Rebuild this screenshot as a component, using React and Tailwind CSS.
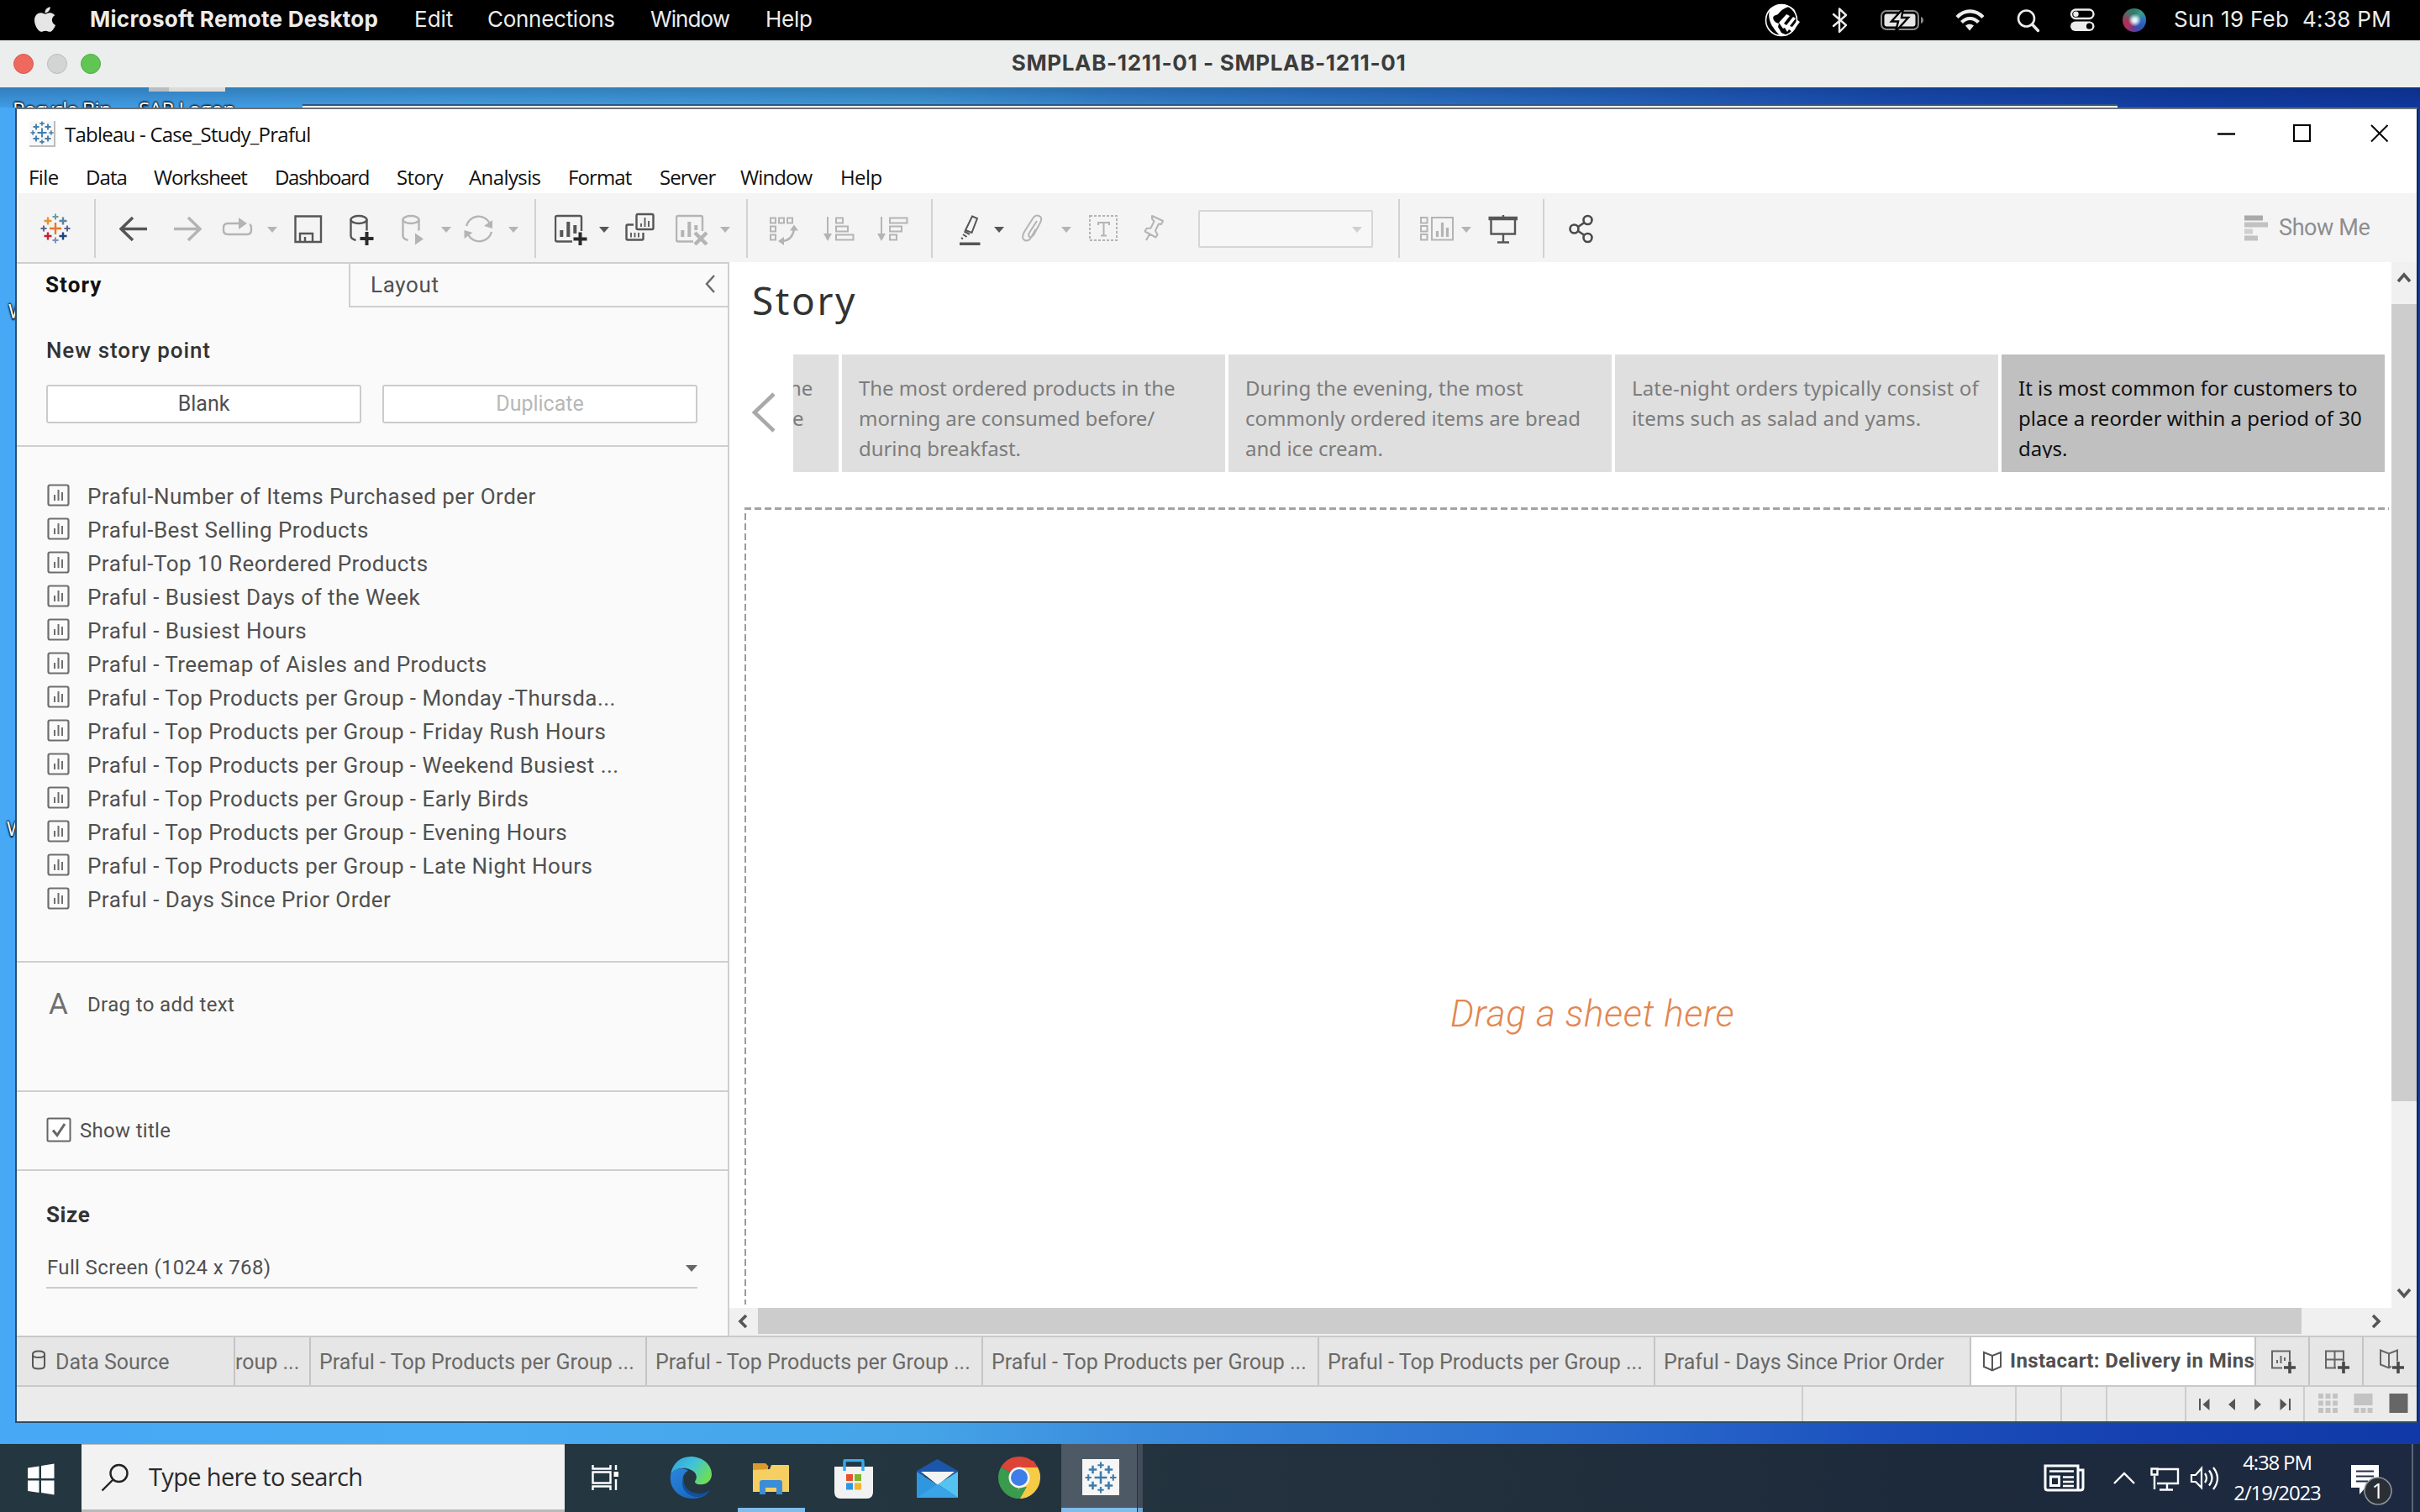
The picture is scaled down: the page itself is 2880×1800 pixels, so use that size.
import React from "react";
import { FaApple } from "react-icons/fa";

const INTER = "font-[Inter,sans-serif]";
const SEGOE = "font-['Open_Sans','Noto_Sans',sans-serif]";
const BENTON = "font-[Roboto,sans-serif]";
const BOOK = "font-['Noto_Sans',sans-serif]";

/* ---------- generic helpers ---------- */

function Svg({ x = 0, y = 0, w, h, className = "", sw = 2, children }) {
  return (
    <svg
      width={w}
      height={h}
      viewBox={`${x} ${y} ${w} ${h}`}
      fill="none"
      stroke="currentColor"
      strokeWidth={sw}
      className={`block shrink-0 ${className}`}
    >
      {children}
    </svg>
  );
}

function Tool({ x, w, className = "", children, sw }) {
  return (
    <Svg x={x} y={252} w={w} h={40} sw={sw} className={className}>
      {children}
    </Svg>
  );
}

const Caret = ({ className = "" }) => (
  <Svg w={12} h={40} className={className}>
    <path d="M0 18h12l-6 7z" fill="currentColor" stroke="none" />
  </Svg>
);

const Sep = ({ className = "" }) => <div className={`h-[70px] w-[2px] shrink-0 bg-[#d2d2d2] ${className}`} />;

const MARK = [
  [18, 18, 7], [9, 9, 4.5], [27, 9, 4.5], [9, 27, 4.5], [27, 27, 4.5],
  [18, 4, 3.5], [18, 32, 3.5], [4, 18, 3.5], [32, 18, 3.5],
];
const COLOR_MARK = ["#e8762d", "#eb9129", "#59879b", "#c72037", "#1f447e", "#7199a6", "#7b8eb8", "#5b6591", "#5b6591"];

function TableauMark({ size, colored, className = "" }) {
  return (
    <svg width={size} height={size} viewBox="0 0 36 36" fill="none" className={`block shrink-0 ${className}`}>
      {MARK.map(([cx, cy, r], i) => (
        <path
          key={i}
          d={`M${cx - r} ${cy}h${2 * r}M${cx} ${cy - r}v${2 * r}`}
          stroke={colored ? COLOR_MARK[i] : "#3f7cac"}
          strokeWidth={i > 4 ? 2 : 2.4}
        />
      ))}
    </svg>
  );
}

/* ---------- macOS ---------- */

function MacMenuBar() {
  return (
    <div className={`${INTER} flex h-[48px] shrink-0 items-center bg-black pb-[3px] text-[26px] leading-[45px] whitespace-nowrap text-[#ececec]`}>
      <FaApple className="ml-[38px] h-[34px] w-[31px] shrink-0 text-[#e6e6e6]" />
      <div className="ml-[38px] w-[386px] font-bold tracking-[0.29px]">Microsoft Remote Desktop</div>
      <div className="w-[87px]">Edit</div>
      <div className="w-[194px] tracking-[-0.28px]">Connections</div>
      <div className="w-[137px] tracking-[-0.9px]">Window</div>
      <div className="tracking-[-0.3px]">Help</div>
      <div className="ml-auto flex items-center pt-[3px]">
        <Svg x={2102} y={4} w={42} h={40}>
          <circle cx="2122" cy="24" r="18.500" fill="#000" stroke="#fff" strokeWidth="1.600" />
          <path d="M2108 12c7-8 20-9 29-1l2 3-8-6c-7 2-10 5-13 9l-5 2c-2 3 0 6 3 8l3 1-1 4 4 7 7 3c-2 1-8 1-10-1-6-6-6-8-8-10-3-5-5-12-3-19z" fill="#fff" stroke="none" />
          <path d="M2119 27l9-10 4 2-7 9 3 2 8-10 3 2-7 9 3 1 6-8 3 2-9 12-4-3-2 3-3-5-2 1z" fill="#fff" stroke="none" />
        </Svg>
        <Svg x={2182} y={8} w={20} h={32} sw={2.4} className="ml-[38px]">
          <path d="M2184 17l15 13-8 8V10.500l8 7.500-15 13" strokeLinejoin="round" strokeLinecap="round" />
        </Svg>
        <Svg x={2240} y={8} w={52} h={32} className="ml-[38px]">
          <rect x="2241" y="13" width="44" height="22" rx="6" stroke="#8a8a8a" />
          <path d="M2288 20c4 1 4 7 0 8z" fill="#8a8a8a" stroke="none" />
          <rect x="2244.500" y="16.500" width="37" height="15" rx="3" fill="#e6e6e6" stroke="none" />
          <path d="M2267 10l-14 15.500h8l-3 12 15-16.500h-8z" fill="#e6e6e6" stroke="#000" strokeWidth="2.400" />
        </Svg>
        <Svg x={2328} y={8} w={36} h={32} sw={4.2} className="ml-[36px]">
          <path d="M2331 20.500c9-9.500 22-9.500 31 0M2336.500 26.500c6-6 14-6 20 0" />
          <path d="M2341 30.500c3-2.500 7-2.500 10 0l-5 6z" fill="currentColor" stroke="none" />
        </Svg>
        <Svg x={2402} y={8} w={28} h={32} sw={2.600} className="ml-[38px]">
          <circle cx="2413.500" cy="22" r="9.500" />
          <path d="M2420.500 29l7 7.500" strokeWidth="3.400" strokeLinecap="round" />
        </Svg>
        <Svg x={2465} y={8} w={32} h={32} sw={2.400} className="ml-[35px]">
          <rect x="2467" y="11.500" width="26.500" height="10.500" rx="5.250" />
          <circle cx="2472.500" cy="16.700" r="3.200" fill="currentColor" stroke="none" />
          <rect x="2466" y="25.500" width="28.500" height="11.500" rx="5.750" fill="currentColor" stroke="none" />
          <circle cx="2488.500" cy="31.200" r="3.600" fill="#000" stroke="none" />
        </Svg>
        <div className="ml-[31px] h-[28px] w-[28px] rounded-full bg-[radial-gradient(circle_at_52%_50%,#ffffff_0,#cfe6f0_14%,transparent_38%),conic-gradient(from_0deg,#2f7d68,#3f9a8c,#2e6fc0,#2b58b5,#5b3f9c,#b02c5c,#a03656,#4c6f68,#2f7d68)]" />
      </div>
      <div className="ml-[33px] w-[153px] tracking-[0.32px]">Sun 19 Feb</div>
      <div className="w-[140px] tracking-[0.3px]">4:38 PM</div>
    </div>
  );
}

function MacTitleBar() {
  return (
    <div className="flex h-[56px] shrink-0 items-center bg-[#eceeed]">
      <div className="flex w-[300px] gap-[16px] pl-[16px]">
        <div className="h-[24px] w-[24px] rounded-full border border-[#d9574b] bg-[#ee6a5f]" />
        <div className="h-[24px] w-[24px] rounded-full border border-[#b9bbba] bg-[#d3d5d4]" />
        <div className="h-[24px] w-[24px] rounded-full border border-[#4fae43] bg-[#61c554]" />
      </div>
      <div className={`${INTER} flex-1 pr-[303px] pb-[3px] text-center text-[26px] font-bold tracking-[0.65px] text-[#3c3c3c]`}>
        SMPLAB-1211-01 - SMPLAB-1211-01
      </div>
    </div>
  );
}

/* ---------- Tableau window ---------- */

function WindowTitle() {
  return (
    <div className={`${SEGOE} flex h-[58px] shrink-0 items-center text-[24px] text-[#111]`}>
      <div className="ml-[15px] flex h-[31px] w-[31px] items-center justify-center border-r-2 border-b-2 border-[#bdbdbd] bg-[#f7f7f7]">
        <TableauMark size={28} />
      </div>
      <div className="ml-[11px] pt-[2px] tracking-[-0.76px] whitespace-nowrap">Tableau - Case_Study_Praful</div>
      <Svg x={2638} y={144} w={214} h={30} className="mr-[24px] ml-auto text-black">
        <path d="M2639 159.500h21" strokeWidth="2.400" />
        <rect x="2730" y="149" width="19" height="19" />
        <path d="M2822 149l19.500 19.500M2841.500 149l-19.500 19.500" strokeWidth="1.900" />
      </Svg>
    </div>
  );
}

const MENUS = [
  ["File", "w-[68px] tracking-[-0.6px]"],
  ["Data", "w-[81px] tracking-[-0.9px]"],
  ["Worksheet", "w-[144px] tracking-[-1.1px]"],
  ["Dashboard", "w-[145px] tracking-[-1.3px]"],
  ["Story", "w-[86px] tracking-[-0.6px]"],
  ["Analysis", "w-[118px] tracking-[-0.6px]"],
  ["Format", "w-[109px] tracking-[-0.9px]"],
  ["Server", "w-[96px] tracking-[-0.9px]"],
  ["Window", "w-[119px] tracking-[-0.9px]"],
  ["Help", "w-[60px] tracking-[-0.6px]"],
];

function MenuRow() {
  return (
    <div className={`${SEGOE} flex h-[42px] shrink-0 items-center pt-[4px] pl-[14px] text-[24px] text-[#111]`}>
      {MENUS.map(([label, cls]) => (
        <div key={label} className={`shrink-0 whitespace-nowrap ${cls}`}>{label}</div>
      ))}
    </div>
  );
}

function Toolbar() {
  const on = "text-[#565656]";
  const off = "text-[#b4b4b4]";
  return (
    <div className="flex h-[82px] shrink-0 items-center bg-[#f4f4f4] pt-[2px]">
      <TableauMark size={36} colored className="ml-[28px]" />
      <Sep className="ml-[28px]" />
      <Tool x={142} w={34} sw={3.6} className={`ml-[28px] ${on}`}>
        <path d="M144 272.500h31M158 259l-14 13.500 14 13.500" />
      </Tool>
      <Tool x={206} w={34} sw={3.6} className={`ml-[30px] ${off}`}>
        <path d="M207 272.500h31M224 259l14 13.500-14 13.500" />
      </Tool>
      <Tool x={264} w={38} className={`ml-[24px] ${off}`}>
        <path d="M288 266h-17q-5 0-5 5v3q0 5 5 5h23q5 0 5-5v-3q0-3-2-4" strokeWidth="2.400" />
        <path d="M284 259l10 7-10 7z" fill="currentColor" stroke="none" />
      </Tool>
      <Caret className={`ml-[16px] ${off}`} />
      <Tool x={350} w={34} sw={2.400} className={`ml-[20px] ${on}`}>
        <path d="M351.500 257.500h30.500v30.500h-30.500zM357 288v-10h15v10M363 288v-6" />
      </Tool>
      <Tool x={414} w={32} sw={2.400} className={`ml-[30px] ${on}`}>
        <ellipse cx="427" cy="261.500" rx="9.500" ry="4.500" />
        <path d="M417.500 261.500v19q0 4 6 5.500M436.500 261.500v13" />
        <path d="M436.500 276v16M428.500 284h16" strokeWidth="4" stroke="#2b2b2b" />
      </Tool>
      <Tool x={477} w={30} sw={2.400} className={`ml-[31px] ${off}`}>
        <ellipse cx="489" cy="261.500" rx="9.500" ry="4.500" />
        <path d="M479.500 261.500v19q0 4 6 5.500M498.500 261.500v13" />
        <path d="M494 277.500v14l10-7z" fill="currentColor" stroke="none" />
      </Tool>
      <Caret className={`ml-[18px] ${off}`} />
      <Tool x={552} w={36} sw={2.400} className={`ml-[15px] ${off}`}>
        <path d="M555 269a15 15 0 0 1 28-3M585 276a15 15 0 0 1-28 3" />
        <path d="M586 262v10l-10-3zM552.500 284v-10l10 3z" fill="currentColor" stroke="none" />
      </Tool>
      <Caret className={`ml-[17px] ${off}`} />
      <Sep className="ml-[19px]" />
      <Tool x={660} w={40} sw={2.400} className={`ml-[22px] ${on}`}>
        <path d="M681 287.500h-18q-2 0-2-2v-26.500q0-2 2-2h27q2 0 2 2v16" />
        <path d="M668.300 274v8M676.300 264v18M684.300 268v10" strokeWidth="4" />
        <path d="M690.500 276.500v16M682.500 284.500h16" strokeWidth="4" stroke="#2b2b2b" />
      </Tool>
      <Caret className={`ml-[13px] ${on}`} />
      <Tool x={744} w={36} sw={2.400} className={`ml-[19px] ${on}`}>
        <rect x="757.500" y="255" width="20" height="18" rx="1.500" />
        <path d="M754 267.500h-7q-1.500 0-1.500 1.500v15q0 1.500 1.500 1.500h17q1.500 0 1.500-1.500v-7" />
        <path d="M763 266v4M767.500 259v11M772 263v7M751 277v5.500M755.500 277v5.500M760 277v5.500" strokeWidth="1.800" />
      </Tool>
      <Tool x={804} w={40} sw={2.400} className={`ml-[24px] ${off}`}>
        <path d="M825 287.500h-18q-2 0-2-2v-26.500q0-2 2-2h27q2 0 2 2v16" />
        <path d="M812.300 274v8M820.300 264v18M828.300 268v6" strokeWidth="4" />
        <path d="M827 277l14 14M841 277l-14 14" strokeWidth="4.400" />
      </Tool>
      <Caret className={`ml-[13px] ${off}`} />
      <Sep className="ml-[19px]" />
      <Tool x={915} w={36} className={`ml-[25px] ${off}`}>
        <path d="M917 259.500h6v6h-6zM927 259.500h6v6h-6zM937 259.500h6v6h-6zM917 269.500h6v6h-6zM917 279.500h6v6h-6z" />
        <path d="M931 287q12-1 14-14" strokeWidth="2.400" />
        <path d="M945 267.500l5 7h-10zM926 287l7-5v10z" fill="currentColor" stroke="none" />
      </Tool>
      <Tool x={979} w={38} className={`ml-[28px] ${off}`}>
        <path d="M985 258v22M995 259.500h8v6h-8zM995 269.500h14v6h-14zM995 279.500h20.500v6h-20.500z" />
        <path d="M980 278h10l-5 9z" fill="currentColor" stroke="none" />
      </Tool>
      <Tool x={1043} w={38} className={`ml-[26px] ${off}`}>
        <path d="M1049 258v22M1059 259.500h20.500v6h-20.500zM1059 269.500h14v6h-14zM1059 279.500h8v6h-8z" />
        <path d="M1044 278h10l-5 9z" fill="currentColor" stroke="none" />
      </Tool>
      <Sep className="ml-[27px]" />
      <Tool x={1141} w={28} className={`ml-[31px] ${on}`}>
        <path d="M1157 257.500l6 2.500-6.500 17-7.500-3zM1147.500 275.500l6.500 3.500M1146 279l4.500 3M1144 283l2 1.500" />
        <path d="M1142 290.500h24.500" strokeWidth="4" />
      </Tool>
      <Caret className={`ml-[14px] ${on}`} />
      <Tool x={1215} w={28} className={`ml-[20px] ${off}`}>
        <path d="M1234 263l-9 14q-2 4 .5 5t5-3l7.500-14q3-6-1.500-8t-8 4l-9.500 15q-4 8 .5 10t8-4l5-9" />
      </Tool>
      <Caret className={`ml-[20px] ${off}`} />
      <Tool x={1295} w={37} className={`ml-[20px] ${off}`}>
        <rect x="1297" y="257" width="32" height="29" strokeDasharray="3 2" />
        <path d="M1307 268v-3h13v3M1313.500 265v15M1310 280.500h7" />
      </Tool>
      <Tool x={1359} w={28} className={`ml-[27px] ${off}`}>
        <path d="M1371 257l13 6-2 4-3-.5-4 8 2.500 5-2 3-13-7 2-3.500 5-.5 4-8-2.500-3zM1368 279l-4 7" strokeLinejoin="round" />
      </Tool>
      <div className="ml-[39px] flex h-[45px] w-[208px] shrink-0 items-center justify-end rounded-[2px] border-2 border-[#d6d6d6] bg-[#f7f7f7] pr-[11px] text-[#cfcfcf]">
        <Caret />
      </div>
      <Sep className="ml-[30px]" />
      <Tool x={1689} w={42} className={`ml-[23px] ${off}`}>
        <path d="M1691 259h7.500v6.500h-7.500zM1691 269h7.500v6.500h-7.500zM1691 279h7.500v6.500h-7.500zM1704 259h25v26.500h-25z" />
        <path d="M1710.500 275v7M1716.500 265v17M1722.500 271v11" strokeWidth="3.200" />
      </Tool>
      <Caret className={`ml-[8px] ${off}`} />
      <Tool x={1770} w={38} className={`ml-[19px] ${on}`}>
        <path d="M1771.500 260h34.500" strokeWidth="4.600" />
        <path d="M1789 256v4M1774.500 262v16.500h28.500v-16.500M1789 279v9M1782 288.500h14" strokeWidth="2.400" />
      </Tool>
      <Sep className="ml-[28px]" />
      <Tool x={1867} w={30} sw={2.600} className="ml-[29px] text-[#4a4a4a]">
        <circle cx="1873.500" cy="272.500" r="5" />
        <circle cx="1889.500" cy="262" r="5" />
        <circle cx="1889.500" cy="283" r="5" />
        <path d="M1878 270l7.500-5M1878 275l7.500 5" />
      </Tool>
      <Tool x={2671} w={30} className="ml-auto">
        <path d="M2671 259.500h22" stroke="#a9a9a9" strokeWidth="6" />
        <path d="M2671 267.500h28" stroke="#c2c2c2" strokeWidth="6" />
        <path d="M2671 275.500h10" stroke="#d0d0d0" strokeWidth="6" />
        <path d="M2671 283.500h16" stroke="#c2c2c2" strokeWidth="6" />
      </Tool>
      <div className={`${BENTON} mr-[54px] ml-[11px] w-[110px] pb-[1px] text-[27px] tracking-[-0.4px] whitespace-nowrap text-[#8e8e8e]`}>
        Show Me
      </div>
    </div>
  );
}

const SHEETS = [
  "Praful-Number of Items Purchased per Order",
  "Praful-Best Selling Products",
  "Praful-Top 10 Reordered Products",
  "Praful - Busiest Days of the Week",
  "Praful - Busiest Hours",
  "Praful - Treemap of Aisles and Products",
  "Praful - Top Products per Group - Monday -Thursda...",
  "Praful - Top Products per Group - Friday Rush Hours",
  "Praful - Top Products per Group - Weekend Busiest ...",
  "Praful - Top Products per Group - Early Birds",
  "Praful - Top Products per Group - Evening Hours",
  "Praful - Top Products per Group - Late Night Hours",
  "Praful - Days Since Prior Order",
];

function Sidebar() {
  return (
    <div className={`${BENTON} flex w-[848px] shrink-0 flex-col border-t-2 border-r-2 border-[#cfcfcf] bg-[#fafafa] whitespace-nowrap text-[#505050]`}>
      <div className="flex h-[52px] shrink-0 text-[26px] leading-[50px]">
        <div className="w-[395px] pl-[34px] font-bold tracking-[1.1px] text-[#111]">Story</div>
        <div className="flex flex-1 justify-between border-b-2 border-l-2 border-[#cfcfcf] pl-[24px] tracking-[0.65px]">
          <span>Layout</span>
          <Svg w={14} h={22} className="mt-[13px] mr-[14px] text-[#6a6a6a]">
            <path d="M12 1L3 11l9 10" strokeWidth="2.400" />
          </Svg>
        </div>
      </div>
      <div className="h-[166px] shrink-0 border-b-2 border-[#cfcfcf] pt-[30px] pl-[35px]">
        <div className="text-[26px] leading-[42px] font-medium tracking-[0.9px] text-[#333]">New story point</div>
        <div className="mt-[20px] flex gap-[25px] text-center text-[25px] leading-[41px]">
          <div className="h-[46px] w-[375px] rounded-[3px] border-2 border-[#cbcbcb] bg-white">Blank</div>
          <div className="h-[46px] w-[375px] rounded-[3px] border-2 border-[#cbcbcb] bg-white text-[#b8b8b8]">Duplicate</div>
        </div>
      </div>
      <div className="h-[614px] shrink-0 border-b-2 border-[#cfcfcf] pt-[39px] pl-[36px]">
        {SHEETS.map((s) => (
          <div key={s} className="flex h-[40px] items-center">
            <Svg w={27} h={27} className="mb-[3px] text-[#6e6e6e]">
              <rect x="1.500" y="1.500" width="24" height="24" rx="2" strokeWidth="2.200" />
              <path d="M9 13v7M13.500 7v13M18 10v10" />
            </Svg>
            <span className="ml-[21px] text-[26px] tracking-[0.46px]">{s}</span>
          </div>
        ))}
      </div>
      <div className="flex h-[154px] shrink-0 border-b-2 border-[#cfcfcf] pt-[30px] pl-[38px] leading-[40px]">
        <span className="w-[46px] text-[35px] leading-[39px] text-[#707070]">A</span>
        <span className="text-[24px] tracking-[0.36px]">Drag to add text</span>
      </div>
      <div className="flex h-[94px] shrink-0 items-center border-b-2 border-[#cfcfcf] pb-[2px] pl-[35px]">
        <Svg w={30} h={30} className="text-[#666]">
          <rect x="1.500" y="1.500" width="27" height="27" rx="1.500" fill="#fff" />
          <path d="M8 15.500l5 6 9-13.500" strokeWidth="3" />
        </Svg>
        <span className="ml-[10px] pt-[1px] text-[24px] tracking-[0.3px]">Show title</span>
      </div>
      <div className="flex-1 pt-[32px] pl-[35px]">
        <div className="text-[26px] leading-[40px] font-bold tracking-[0.6px] text-[#333]">Size</div>
        <div className="mt-[20px] flex h-[48px] w-[775px] justify-between border-b-2 border-[#cbcbcb] pl-[1px] text-[24px] leading-[46px] tracking-[0.35px]">
          <span>Full Screen (1024 x 768)</span>
          <Svg w={14} h={46} className="text-[#666]">
            <path d="M0 20h14l-7 8z" fill="currentColor" stroke="none" />
          </Svg>
        </div>
      </div>
    </div>
  );
}

const POINTS = [
  { cls: "bg-[#dfdfdf] text-[#7c7c7c] tracking-[-0.05px]", lines: ["The most ordered products in the", "morning are consumed before/", "during breakfast."] },
  { cls: "bg-[#dfdfdf] text-[#7c7c7c] tracking-[0.02px]", lines: ["During the evening, the most", "commonly ordered items are bread", "and ice cream."] },
  { cls: "bg-[#dfdfdf] text-[#7c7c7c] tracking-[0.16px]", lines: ["Late-night orders typically consist of", "items such as salad and yams."] },
  { cls: "bg-[#c0c0c0] text-[#111]", lines: ["It is most common for customers to", "place a reorder within a period of 30", "days."] },
];

function StoryCanvas() {
  return (
    <div className="flex min-w-0 flex-1 flex-col bg-white">
      <div className={`${BOOK} h-[90px] shrink-0 pl-[27px] text-[46px] leading-[91px] tracking-[2.6px] text-[#333]`}>Story</div>
      <div className="mt-[20px] flex h-[140px] shrink-0">
        <Svg w={30} h={48} className="mt-[45px] ml-[26px] text-[#a9a9a9]">
          <path d="M27 2L4 24l23 22" strokeWidth="4.600" />
        </Svg>
        <div className={`${BOOK} ml-[20px] flex w-[1894px] gap-[4px] overflow-hidden text-[24px] leading-[36px] whitespace-nowrap`}>
          <div className="w-[54px] shrink-0 overflow-hidden bg-[#dfdfdf] pt-[22px] text-[#7c7c7c]">
            <div className="-ml-[5px]">he</div>
            <div className="-ml-[1px]">e</div>
          </div>
          {POINTS.map(({ cls, lines }) => (
            <div key={lines[0]} className={`w-[456px] shrink-0 pt-[22px] pl-[20px] ${cls}`}>
              <div className="h-[101px] overflow-hidden">
                {lines.map((l) => <div key={l}>{l}</div>)}
              </div>
            </div>
          ))}
        </div>
      </div>
      <div className="mt-[42px] mr-[3px] ml-[18px] h-[3px] shrink-0 bg-[repeating-linear-gradient(90deg,#a3a3a3_0_8px,transparent_8px_12px)]" />
      <div className="mb-[4px] ml-[18px] flex min-h-0 flex-1">
        <div className="w-[2px] bg-[repeating-linear-gradient(180deg,transparent_0_4px,#9a9a9a_4px_12px)]" />
        <div className={`${BENTON} pt-[570px] pl-[838px] text-[44px] leading-[60px] font-light tracking-[0.65px] whitespace-nowrap text-[#e3864f] italic`}>
          Drag a sheet here
        </div>
      </div>
    </div>
  );
}

function Main() {
  return (
    <div className="flex min-w-0 flex-1 flex-col bg-[#f0f0f0] text-[#565656]">
      <div className="flex min-h-0 flex-1">
        <StoryCanvas />
        <div className="flex w-[30px] shrink-0 flex-col items-center bg-[#f0f0f0]">
          <Svg w={20} h={50} sw={3.600}>
            <path d="M3 23l7-8 7 8" />
          </Svg>
          <div className="h-[949px] w-full bg-[#cdcdcd]" />
          <Svg w={20} h={36} sw={3.600} className="mt-auto">
            <path d="M3 14l7 8 7-8" />
          </Svg>
        </div>
      </div>
      <div className="flex h-[33px] shrink-0 items-center pb-[2px]">
        <Svg w={34} h={30} sw={3.600}>
          <path d="M20 8l-7 7 7 7" />
        </Svg>
        <div className="h-[31px] w-[1837px] bg-[#cccccc]" />
        <Svg w={24} h={30} sw={3.600} className="mr-[41px] ml-auto">
          <path d="M13 8l7 7-7 7" />
        </Svg>
      </div>
    </div>
  );
}

const TabIcon = ({ className = "", children }) => (
  <div className={`flex shrink-0 items-center justify-center border-[#c4c4c4] pl-[2px] ${className}`}>
    <Svg w={32} h={36} className="text-[#666]">
      {children}
      <path d="M24 18v14M17 25h14" strokeWidth="3.600" stroke="#4a4a4a" />
    </Svg>
  </div>
);

function TabBar() {
  const tab = "shrink-0 overflow-hidden border-r-2 border-[#c4c4c4]";
  return (
    <div className={`${BENTON} flex h-[61px] shrink-0 border-t-2 border-b-2 border-[#c9c9c9] bg-[#e6e6e6] text-[25px] leading-[60px] whitespace-nowrap text-[#696969]`}>
      <div className={`${tab} flex w-[260px] pl-[17px]`}>
        <Svg w={18} h={24} className="mt-[15px] mr-[11px] text-[#565656]">
          <path d="M2 5q0-3.500 7-3.500t7 3.500v14q0 3.500-7 3.500t-7-3.500zM2 6q0 3 7 3t7-3" />
        </Svg>
        <span>Data Source</span>
      </div>
      <div className={`${tab} w-[90px]`}>roup ...</div>
      <div className={`${tab} w-[400px] pl-[10px]`}>Praful - Top Products per Group ...</div>
      <div className={`${tab} w-[400px] pl-[10px]`}>Praful - Top Products per Group ...</div>
      <div className={`${tab} w-[400px] pl-[10px]`}>Praful - Top Products per Group ...</div>
      <div className={`${tab} w-[400px] pl-[10px]`}>Praful - Top Products per Group ...</div>
      <div className={`${tab} w-[376px] pl-[10px]`}>Praful - Days Since Prior Order</div>
      <div className={`${tab} flex w-[339px] bg-white pl-[13px] text-[24px] leading-[56px] font-bold tracking-[0.36px] text-[#505050]`}>
        <Svg w={24} h={26} className="mt-[15px] mr-[9px] text-[#565656]">
          <path d="M2 3l10 4 10-4v17l-10 4.500-10-4.500zM12 7v17" />
        </Svg>
        <span>Instacart: Delivery in Mins</span>
      </div>
      <TabIcon className="w-[64px] border-r-2">
        <path d="M15 25.500h-12v-20h21v12M9 20v-4M13.500 20v-9M18 17v-4" />
      </TabIcon>
      <TabIcon className="w-[64px] border-r-2">
        <path d="M15 25.500h-12v-20h21v12M3 15.500h21M13.500 5.500v20" />
      </TabIcon>
      <TabIcon className="flex-1">
        <path d="M16 23.500l-3 2-10-4v-17l10 4 10-4v13M13 8.500v17" />
      </TabIcon>
    </div>
  );
}

function StatusBar() {
  const cell = "border-r-2 border-[#cdcdcd]";
  return (
    <div className="flex h-[41px] shrink-0 bg-[#ebebeb]">
      <div className={`${cell} w-[2126px]`} />
      <div className={`${cell} w-[254px]`} />
      <div className={`${cell} w-[54px]`} />
      <div className={`${cell} w-[54px]`} />
      <div className={`${cell} w-[94px]`} />
      <div className={`${cell} flex w-[141px] items-center pl-[14px]`}>
        <Svg x={2616} y={1656} w={114} h={30} className="text-[#565656]">
          <path d="M2618 1664v14M2725 1664v14" />
          <path d="M2629.500 1664v14l-8-7zM2660 1664v14l-8-7zM2683 1664v14l8-7zM2713.500 1664v14l8-7z" fill="currentColor" stroke="none" />
        </Svg>
      </div>
      <Svg x={2758} y={1656} w={110} h={30} className="mt-[5px] ml-[15px]">
        <g fill="#c3c3c3" stroke="none">
          {[0, 1, 2].map((r) => [0, 1, 2].map((c) => <rect key={`${r}${c}`} x={2759 + c * 8.500} y={1659 + r * 8.500} width="6" height="6" />))}
          <rect x="2801.500" y="1659" width="22" height="14" />
          {[0, 1, 2].map((c) => <rect key={c} x={2801.500 + c * 8} y="1676" width="6" height="6" />)}
        </g>
        <rect x="2843.500" y="1659" width="22" height="23" fill="#666" stroke="none" />
      </Svg>
    </div>
  );
}

function TableauWindow() {
  return (
    <div className="absolute top-[24px] left-[18px] flex h-[1566px] w-[2860px] flex-col overflow-hidden border-2 border-t-[#6c7276] border-r-[#122a55] border-b-[#2d4f6d] border-l-[#2d4f6d] bg-white">
      <WindowTitle />
      <MenuRow />
      <Toolbar />
      <div className="flex h-[1278px] shrink-0">
        <Sidebar />
        <Main />
      </div>
      <TabBar />
      <StatusBar />
    </div>
  );
}

/* ---------- desktop & taskbar ---------- */

function Desktop() {
  const label = `${SEGOE} text-[24px] leading-[32px] whitespace-nowrap text-white [text-shadow:0_2px_2px_#000,0_-1px_2px_#000,0_0_3px_#000]`;
  return (
    <div className="relative h-[1615px] shrink-0 overflow-hidden bg-[linear-gradient(90deg,#47a8f6_0%,#49abf2_20%,#45a4e8_38%,#3a8bdc_47%,#2a6cce_66%,#1c50bd_78%,#143fae_90%,#1139a8_100%)]">
      <div className="absolute top-0 left-0 h-[24px] w-full bg-linear-to-b from-[#00204050] to-[#00204018]" />
      <div className="absolute top-0 left-[177px] h-[5px] w-[91px] border-l-[24px] border-[#b9bcc0] bg-[#dcdcd6]" />
      <div className={`${label} absolute top-[10px] left-0 flex h-[14px] w-[360px] overflow-hidden pl-[15px]`}>
        <div className="w-[150px] tracking-[-0.8px]">Recycle Bin</div>
        <div className="tracking-[-0.4px]">SAP Logon</div>
      </div>
      <div className={`${label} absolute top-[250px] left-0 w-[18px] overflow-hidden pl-[10px]`}>W</div>
      <div className={`${label} absolute top-[866px] left-0 w-[18px] overflow-hidden pl-[8px]`}>W</div>
      <div className="absolute top-[20px] left-[360px] h-[10px] w-[2160px] border-t-2 border-[#31557f] bg-white" />
      <TableauWindow />
    </div>
  );
}

function Taskbar() {
  return (
    <div className={`${SEGOE} flex h-[81px] shrink-0 bg-[linear-gradient(90deg,#24363f_0%,#243640_35%,#22303d_60%,#1d2a3b_80%,#1d2941_100%)] text-white`}>
      <Svg w={97} h={81}>
        <path d="M33 28.500l13.500-2v14.500h-13.500zM49 26l15.500-2.500v17.500h-15.500zM33 43.500h13.500v14.500l-13.500-2zM49 43.500h15.500v17l-15.500-2.500z" fill="#fff" stroke="none" />
      </Svg>
      <div className="flex h-[81px] w-[575px] shrink-0 items-center border-t border-b-[3px] border-[#b9b9b9] bg-[#f2f2f2] text-[29px] tracking-[-0.66px] text-[#2b2b2b]">
        <Svg w={34} h={34} sw={2.400} className="ml-[23px] text-[#222]">
          <circle cx="21.500" cy="12" r="10" />
          <path d="M14.500 19.500L1.500 32.500" />
        </Svg>
        <span className="ml-[23px] pb-[1px] whitespace-nowrap">Type here to search</span>
      </div>
      <Svg x={704} y={1719} w={34} h={81} sw={2.400} className="ml-[32px]">
        <path d="M705.500 1744v4.500h21v-4.500M705.500 1774v-4.500h21v4.500M705.500 1752.500h21v13h-21zM733 1744v6M733 1761v13" />
        <path d="M730.500 1752h5.500v6h-5.500z" fill="#fff" stroke="none" />
      </Svg>
      <svg width="50" height="50" viewBox="0 0 48 48" className="mt-[15px] ml-[59px] block shrink-0">
        <defs>
          <linearGradient id="edge-top" x1="0" y1="0" x2="1" y2="0.500">
            <stop offset="0" stopColor="#2f9fe0" />
            <stop offset="0.550" stopColor="#41c3d8" />
            <stop offset="1" stopColor="#6bdc5c" />
          </linearGradient>
          <linearGradient id="edge-body" x1="0" y1="0" x2="1" y2="1">
            <stop offset="0" stopColor="#2a86dc" />
            <stop offset="1" stopColor="#1560b8" />
          </linearGradient>
        </defs>
        <path d="M1 21C3 8 12 0 24 0c13 0 24 9 24 20 0 8-6 12-12 12-5 0-8-2-7-4 3-4 2-10-5-13C15 11 4 14 1 21z" fill="url(#edge-top)" />
        <path d="M1 21c3-8 14-9 20-5-5 3-6 7-6 11 0 10 9 20 23 16 2-.6 5-2 6-2-4 5-11 7-18 7C11 48-1 37 1 21z" fill="url(#edge-body)" />
        <path d="M21 16c-6 4-7 14-1 21 6 6 17 7 24 2 2-1 1 1 0 2-5 5-12 6-18 4-9-3-13-11-11-18 1-4 3-8 6-11z" fill="#124f9c" />
      </svg>
      <div className="ml-[31px] flex h-[81px] w-[80px] shrink-0 flex-col items-center justify-between border-b-[5px] border-[#7fbcec]">
        <svg width="44" height="40" viewBox="0 0 44 40" className="mt-[21px] block">
          <path d="M0 2h15l4 4h-1v6H0z" fill="#dd9a2c" />
          <path d="M0 10l20-1 2-5h20q1 0 1 1v31H0z" fill="#f5cf62" />
          <path d="M8 39V25q0-3 3-3h21q3 0 3 3v14h-7v-8H15v8z" fill="#3b8ed6" />
        </svg>
      </div>
      <svg width="46" height="48" viewBox="0 0 46 48" className="mt-[18px] ml-[35px] block shrink-0">
        <path d="M12 14V2.500q0-1 1-1h20q1 0 1 1V14" fill="none" stroke="#35aaf0" strokeWidth="3.400" />
        <path d="M0 9h46v30q0 8-8 8H8q-8 0-8-8z" fill="#f2f2f2" />
        <path d="M12 14V9M34 14V9" stroke="#35aaf0" strokeWidth="3.400" />
        <path d="M14 18h8v8h-8z" fill="#e8502b" />
        <path d="M24 18h8v8h-8z" fill="#7eb52c" />
        <path d="M14 28.500h8v8h-8z" fill="#2f97e0" />
        <path d="M24 28.500h8v8h-8z" fill="#f3b52b" />
      </svg>
      <svg width="49" height="46" viewBox="0 0 49 46" className="mt-[18px] ml-[52px] block shrink-0">
        <path d="M0 14L24.500 0 49 14v6H0z" fill="#1b56a8" />
        <path d="M5 15h40L25 31z" fill="#f4f4f4" />
        <path d="M0 15l49 31H0z" fill="#2f97df" />
        <path d="M49 15L25 30l24 16z" fill="#55c3f2" />
        <path d="M0 46l25-16 24 16z" fill="#3aa4e8" />
      </svg>
      <svg width="50" height="50" viewBox="0 0 50 50" className="mt-[15px] ml-[48px] block shrink-0">
        <path d="M25 25L3.350 12.500A25 25 0 0 1 46.650 12.500z" fill="#db4437" />
        <path d="M25 25L46.650 12.500A25 25 0 0 1 25 50z" fill="#f7cb45" />
        <path d="M25 25L25 50A25 25 0 0 1 3.350 12.500z" fill="#3a9a4e" />
        <path d="M25 13h21.900q2 4 3 9l-12 4-6 10-9 14q-1 0 1-12z" fill="#f7cb45" />
        <path d="M25 13h22l-5-8-17 2z" fill="#db4437" />
        <path d="M14 31L3.350 12.500 10 18zM25 37l-5 12q4 1.500 6 1l8-14z" fill="#3a9a4e" />
        <circle cx="25" cy="25" r="12.500" fill="#f5f5f5" />
        <circle cx="25" cy="25" r="10" fill="#3f7ee8" />
      </svg>
      <div className="ml-[25px] flex h-[81px] w-[90px] shrink-0 items-start justify-center border-b-[5px] border-[#7fbcec] bg-[#4d5a66] pt-[18px] pl-[3px]">
        <div className="flex h-[43px] w-[44px] items-center justify-center bg-[#f6f6f6]">
          <TableauMark size={38} />
        </div>
      </div>
      <div className="ml-[1px] h-[81px] w-[6px] shrink-0 border-b-[5px] border-[#6fa6d2] bg-[#434c5a]" />
      <div className="ml-auto flex shrink-0">
        <Svg x={2429} y={1719} w={52} h={81} sw={3}>
          <path d="M2432 1745h39v29h-36q-3 0-3-3zM2471 1750h6v21q0 3-3 3h-3" />
          <path d="M2437 1751.500h29M2453 1758.500h13M2453 1764h13M2453 1769h13" strokeWidth="2.600" />
          <path d="M2438.500 1758h10v10.500h-10z" />
        </Svg>
        <Svg x={2513} y={1719} w={28} h={81} sw={2.400} className="ml-[32px]">
          <path d="M2514 1766l12-12 12 12" />
        </Svg>
        <Svg x={2557} y={1719} w={36} h={81} sw={2.400} className="ml-[16px]">
          <path d="M2566 1749h24v17h-25M2577 1766v7M2568 1773.500h16M2562 1757v16" />
          <path d="M2558.500 1748.500h7v7h-7z" />
        </Svg>
        <Svg x={2604} y={1719} w={36} h={81} sw={2.200} className="ml-[11px]">
          <path d="M2606 1756h5l7-8v23l-7-7h-5zM2622 1754q4 5.500 0 11M2627 1750.500q7 9 0 18M2632 1747q10 13 0 26" />
        </Svg>
        <div className="ml-[6px] flex w-[124px] flex-col items-center pt-[4px] text-[24px] leading-[36px] tracking-[-1.15px] whitespace-nowrap">
          <div>4:38 PM</div>
          <div>2/19/2023</div>
        </div>
        <Svg x={2795} y={1719} w={56} h={81} className="ml-[24px]">
          <path d="M2797 1744h33v27h-16l-7 8v-8h-10z" fill="#fff" stroke="none" />
          <path d="M2803 1751.500h21M2803 1757.500h21M2803 1763.500h14" stroke="#24324a" strokeWidth="2.200" />
          <circle cx="2829" cy="1775" r="16" fill="#2a2f36" stroke="#8d9299" strokeWidth="1.600" />
          <text x="2829" y="1784" textAnchor="middle" fontSize="25" fontFamily="Open Sans, sans-serif" fill="#fff" stroke="none">1</text>
        </Svg>
        <div className="mr-[8px] ml-[18px] h-[81px] w-[2px] bg-[#5a6577]" />
      </div>
    </div>
  );
}

export default function App() {
  return (
    <div className="flex h-[1800px] w-[2880px] flex-col overflow-hidden">
      <MacMenuBar />
      <MacTitleBar />
      <Desktop />
      <Taskbar />
    </div>
  );
}
